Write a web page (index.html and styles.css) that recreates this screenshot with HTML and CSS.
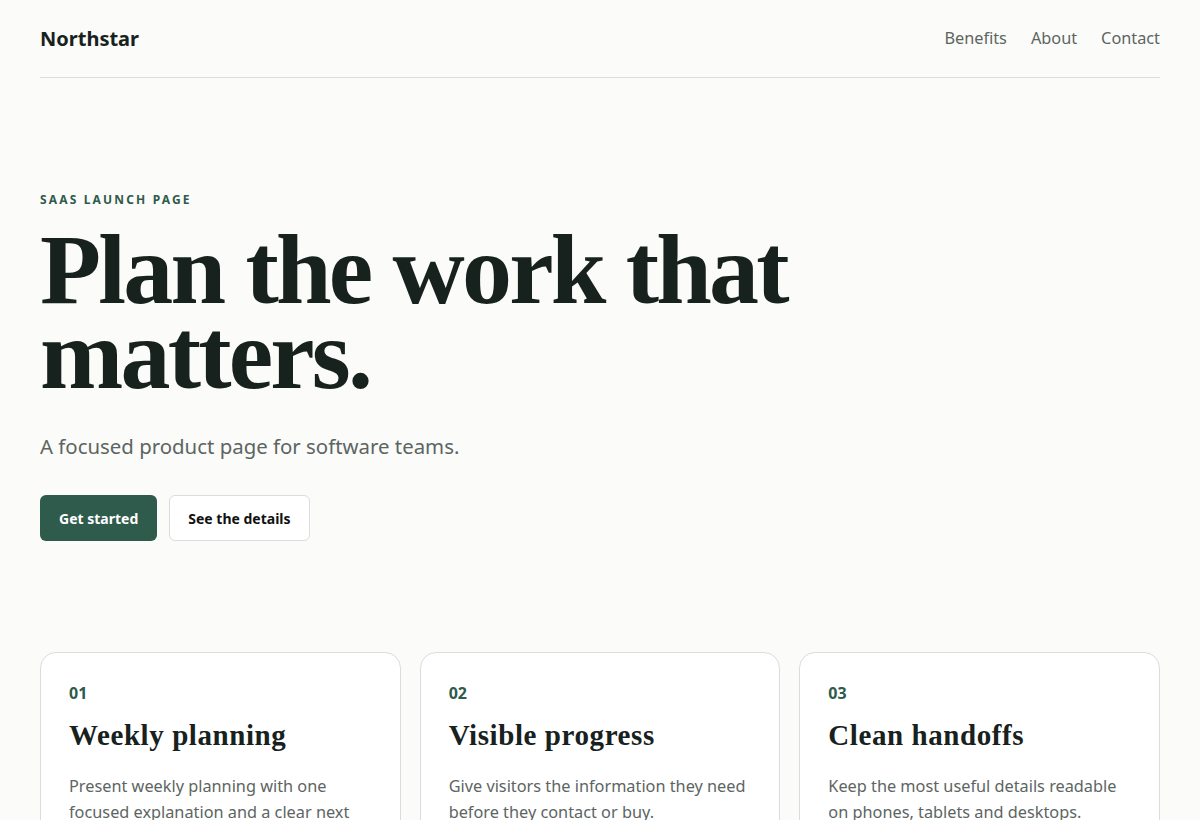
FILE: index.html
```html
<!DOCTYPE html>
<html lang="en">
<head>
<meta charset="utf-8">
<title>Northstar</title>
<link rel="stylesheet" href="styles.css">
</head>
<body>
<div class="page">
  <header class="site-header">
    <a class="brand" href="#">Northstar</a>
    <nav class="nav">
      <a href="#">Benefits</a>
      <a href="#">About</a>
      <a href="#">Contact</a>
    </nav>
  </header>

  <section class="hero">
    <p class="eyebrow">SAAS LAUNCH PAGE</p>
    <h1 class="hero-title">Plan the work that matters.</h1>
    <p class="hero-lead">A focused product page for software teams.</p>
    <div class="actions">
      <a class="btn btn-primary" href="#">Get started</a>
      <a class="btn btn-secondary" href="#">See the details</a>
    </div>
  </section>

  <section class="cards">
    <article class="card">
      <p class="card-num">01</p>
      <h2 class="card-title">Weekly planning</h2>
      <p class="card-text">Present weekly planning with one focused explanation and a clear next step.</p>
    </article>
    <article class="card">
      <p class="card-num">02</p>
      <h2 class="card-title">Visible progress</h2>
      <p class="card-text">Give visitors the information they need before they contact or buy.</p>
    </article>
    <article class="card">
      <p class="card-num">03</p>
      <h2 class="card-title">Clean handoffs</h2>
      <p class="card-text">Keep the most useful details readable on phones, tablets and desktops.</p>
    </article>
  </section>
</div>
</body>
</html>
```

FILE: styles.css
```css
* { box-sizing: border-box; }
html, body { margin: 0; padding: 0; }
body {
  background: #fbfbf9;
  color: #17211d;
  font-family: "Noto Sans", "Open Sans", sans-serif;
}
a { text-decoration: none; color: inherit; }
.page {
  width: 1120px;
  margin: 0 auto;
}
.site-header {
  height: 78px;
  display: flex;
  align-items: center;
  justify-content: space-between;
  border-bottom: 1px solid #dcdcdc;
}
.brand {
  font-size: 20px;
  font-weight: 700;
  color: #17211d;
  margin-top: -1px;
}
.nav {
  display: flex;
  gap: 24px;
  margin-top: -2px;
}
.nav a {
  font-size: 16.3px;
  color: #5c6562;
}
.hero {
  padding-top: 113px;
}
.eyebrow {
  margin: 0;
  font-size: 12px;
  font-weight: 700;
  letter-spacing: 0.18em;
  color: #2f5a4c;
}
.hero-title {
  margin: 19px 0 0;
  font-family: "Liberation Serif", "DejaVu Serif", serif;
  font-weight: 700;
  font-size: 100px;
  line-height: 85px;
  letter-spacing: -0.028em;
  color: #17211d;
  max-width: 820px;
}
.hero-lead {
  margin: 35px 0 0;
  font-size: 20.4px;
  color: #5c6562;
}
.actions {
  margin-top: 35px;
  display: flex;
  gap: 12px;
}
.btn {
  display: inline-flex;
  align-items: center;
  height: 46px;
  padding: 0 18px;
  border-radius: 6px;
  font-size: 14px;
  font-weight: 700;
}
.btn-primary {
  background: #2f5b4d;
  color: #ffffff;
  padding: 0 19px;
}
.btn-secondary {
  background: #ffffff;
  color: #111;
  border: 1px solid #dcdcdc;
}
.cards {
  margin-top: 111px;
  display: grid;
  grid-template-columns: repeat(3, 1fr);
  gap: 19px;
}
.card {
  background: #ffffff;
  border: 1px solid #dcdcdc;
  border-radius: 16px;
  padding: 29px 28px 28px;
  min-height: 220px;
}
.card-num {
  margin: 0;
  font-size: 16px;
  font-weight: 700;
  color: #2f5a4c;
}
.card-title {
  margin: 15px 0 0;
  font-family: "Liberation Serif", "DejaVu Serif", serif;
  font-size: 29px;
  font-weight: 700;
  letter-spacing: 0.02em;
  color: #17211d;
}
.card-text {
  margin: 21px 0 0;
  font-size: 16.3px;
  line-height: 26px;
  color: #5c6562;
}
```
